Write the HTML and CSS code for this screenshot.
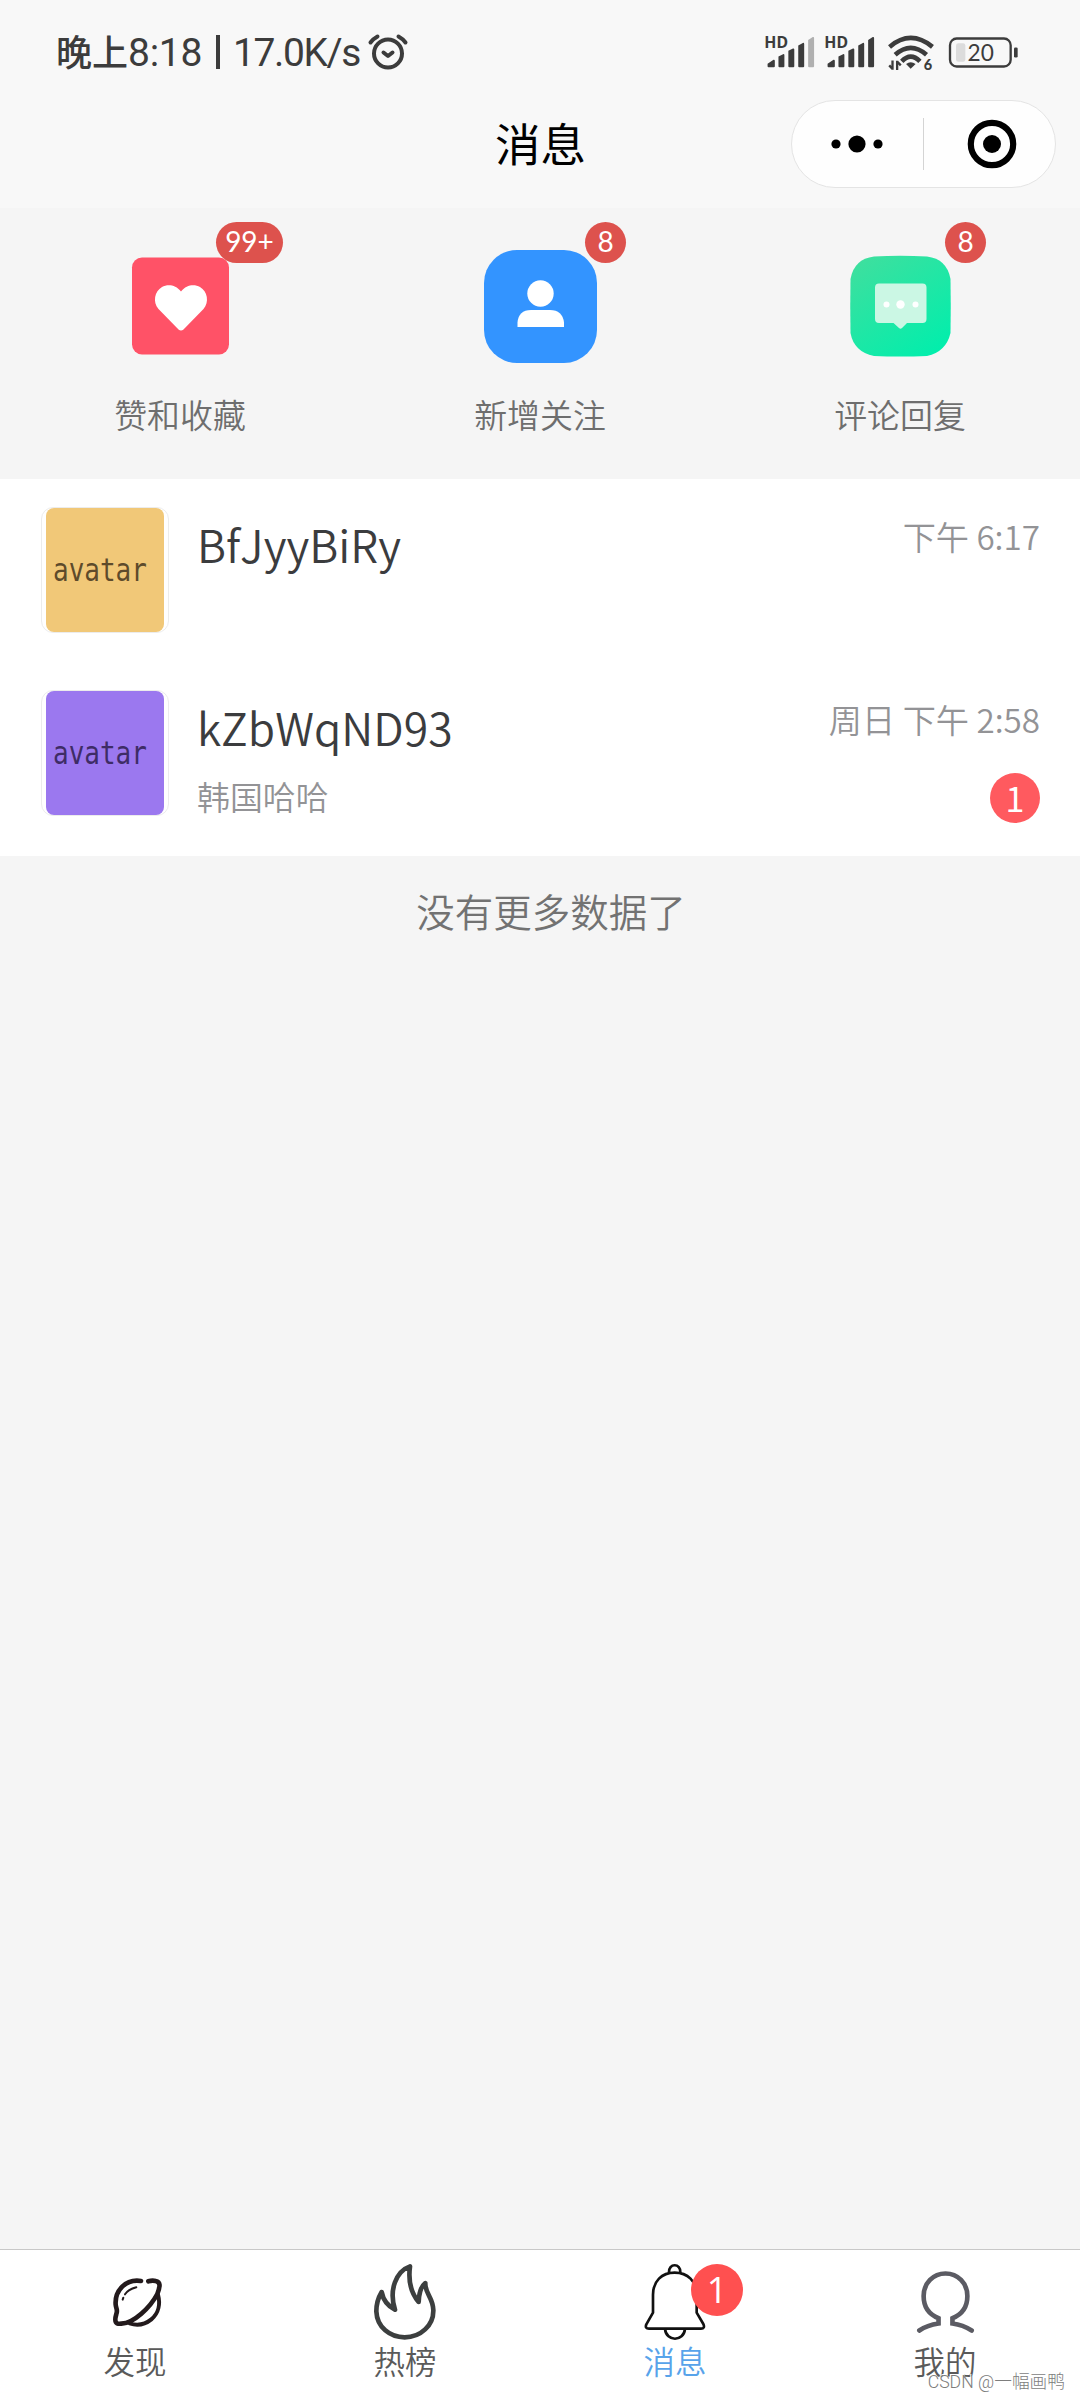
FILE: index.html
```html
<!DOCTYPE html>
<html lang="zh-CN">
<head>
  <meta charset="UTF-8">
  <meta name="viewport" content="width=device-width, initial-scale=1.0">
  <title>消息</title>
  <link rel="stylesheet" href="styles.css">
</head>
<body>
  <!-- Header -->
  <header class="header">
    <div class="status-bar">
      <div class="status-left">
        <span class="status-cn">晚上</span><span class="status-time">8:18</span><span class="status-line"></span><span class="status-speed">17.0K/s</span>
        <svg class="alarm" viewBox="0 0 40 36" fill="none" stroke="#3c3c3c" stroke-width="4" stroke-linecap="round" stroke-linejoin="round">
          <circle cx="20" cy="19.5" r="14"/>
          <path d="M15.5 18.5 L20 22 L24.5 18.5 M2.5 8.5 Q5 5 9.5 2.5 M37.5 8.5 Q35 5 30.5 2.5"/>
        </svg>
      </div>
      <div class="status-right">
        <svg class="signal" viewBox="0 0 150 97" fill="#3c3c3c">
          <text class="hd" x="-3" y="35">HD</text>
          <path d="M7 92 V84 L25 72 Q29 71 29 76 V92 Q29 95 26 95 H10 Q7 95 7 92Z M40 62 L54 55 Q58 54 58 58 V92 Q58 95 55 95 H43 Q40 95 40 92Z M70 45 L84 38 Q88 37 88 41 V92 Q88 95 85 95 H73 Q70 95 70 92Z M100 29 L114 21 Q118 20 118 24 V92 Q118 95 115 95 H103 Q100 95 100 92Z"/>
          <path fill="#b0b0b0" d="M130 12 L144 3 Q148 2 148 6 V92 Q148 95 145 95 H133 Q130 95 130 92Z"/>
        </svg>
        <svg class="signal" viewBox="0 0 150 97" fill="#3c3c3c">
          <text class="hd" x="-3" y="35">HD</text>
          <path d="M7 92 V84 L25 72 Q29 71 29 76 V92 Q29 95 26 95 H10 Q7 95 7 92Z M40 62 L54 55 Q58 54 58 58 V92 Q58 95 55 95 H43 Q40 95 40 92Z M70 45 L84 38 Q88 37 88 41 V92 Q88 95 85 95 H73 Q70 95 70 92Z M100 29 L114 21 Q118 20 118 24 V92 Q118 95 115 95 H103 Q100 95 100 92Z M130 12 L144 3 Q148 2 148 6 V92 Q148 95 145 95 H133 Q130 95 130 92Z"/>
        </svg>
        <svg class="wifi" viewBox="0 0 138 103" fill="none" stroke="#3c3c3c" stroke-width="14">
          <path d="M4 33 Q68 -21 134 33 M21 57 Q68 15 116 57 M41 77 Q68 48 96 77"/>
          <path d="M54 85 Q68 74 83 85 L68 99Z" fill="#3c3c3c" stroke="none"/>
          <path d="M13 74 V102 M13 100 L3 89 M27 103 V75 M27 77 L38 89" stroke-width="7"/>
          <text class="wifi-num" x="108" y="102">6</text>
        </svg>
        <svg class="battery" viewBox="0 0 207 92">
          <rect x="3" y="4" width="182" height="84" rx="20" fill="none" stroke="#3c3c3c" stroke-width="7"/>
          <rect x="21" y="18" width="28" height="56" rx="7" fill="#dcdcdc"/>
          <rect x="195" y="31" width="11" height="30" rx="4" fill="#3c3c3c"/>
          <text class="battery-num" x="95" y="72">20</text>
        </svg>
      </div>
    </div>
    <div class="nav-bar">
      <h1>消息</h1>
      <div class="capsule">
        <svg class="more" viewBox="0 0 52 18">
          <circle cx="5" cy="9" r="4.6"/><circle cx="26" cy="9" r="8.6"/><circle cx="47" cy="9" r="4.6"/>
        </svg>
        <span class="capsule-line"></span>
        <svg class="target" viewBox="0 0 50 50">
          <circle cx="25" cy="25" r="21.2" fill="none" stroke="#000" stroke-width="6.2"/><circle cx="25" cy="25" r="9"/>
        </svg>
      </div>
    </div>
  </header>

  <!-- Notice shortcuts -->
  <section class="notice">
    <div class="notice-item">
      <div class="notice-icon">
        <svg viewBox="0 0 114 114">
          <rect x="9" y="8.5" width="97" height="97" rx="10" fill="#ff5267"/>
          <path fill="#fff" d="M58 42.5 C52.5 35.5 44.500 35 39 38 C31.500 42.500 29.500 53 35.500 60 L55.500 80.500 Q58 82.500 60.500 80.500 L80.500 60 C86.500 53 84.500 42.500 77 38 C71.500 35 63.500 35.500 58 42.500Z"/>
        </svg>
        <span class="notice-badge wide">99+</span>
      </div>
      <span class="notice-label">赞和收藏</span>
    </div>
    <div class="notice-item">
      <div class="notice-icon">
        <svg viewBox="0 0 114 114">
          <rect x="1" y="1" width="113" height="113" rx="33" fill="#3394ff"/>
          <circle cx="57.5" cy="44.5" r="13.2" fill="#fff"/>
          <path fill="#fff" d="M34.5 78 V73.5 Q35.5 61 48 61 H67 Q79.5 61 81 73.5 V78Z"/>
        </svg>
        <span class="notice-badge">8</span>
      </div>
      <span class="notice-label">新增关注</span>
    </div>
    <div class="notice-item">
      <div class="notice-icon">
        <svg viewBox="0 0 114 114">
          <defs>
            <linearGradient id="green" x1="0.1" y1="0" x2="0.8" y2="1">
              <stop offset="0" stop-color="#3fdf9e"/>
              <stop offset="1" stop-color="#02eeac"/>
            </linearGradient>
          </defs>
          <path fill="url(#green)" d="M31 7.5 Q57 6 84 7.5 Q104 10 107.5 30 Q108 57 107.5 84 Q103 103 84 107 Q57 108 31 107 Q11 103 7.5 84 Q7 57 7.5 30 Q11 10 31 7.5Z"/>
          <path fill="#cbf7e4" d="M36 34.5 H79.5 Q83.5 34.5 83.5 38.5 V70 Q83.5 74 79.5 74 H64 L59 79 Q57.5 80.5 56 79 L50.5 74 H36 Q32 74 32 70 V38.5 Q32 34.5 36 34.5Z"/>
          <g fill="#fff"><circle cx="43.5" cy="55.5" r="3"/><circle cx="57.5" cy="55.5" r="4.2"/><circle cx="72.5" cy="55.5" r="3"/></g>
        </svg>
        <span class="notice-badge">8</span>
      </div>
      <span class="notice-label">评论回复</span>
    </div>
  </section>

  <!-- Chat list -->
  <main class="chat-list">
    <div class="chat">
      <div class="avatar"><div class="avatar-img yellow"><span>avatar</span></div></div>
      <div class="chat-body">
        <div class="chat-name">BfJyyBiRy</div>
      </div>
      <div class="chat-side">
        <div class="chat-time">下午 6:17</div>
      </div>
    </div>
    <div class="chat">
      <div class="avatar"><div class="avatar-img purple"><span>avatar</span></div></div>
      <div class="chat-body">
        <div class="chat-name">kZbWqND93</div>
        <div class="chat-text">韩国哈哈</div>
      </div>
      <div class="chat-side">
        <div class="chat-time">周日 下午 2:58</div>
        <div class="unread">1</div>
      </div>
    </div>
  </main>
  <p class="no-more">没有更多数据了</p>

  <!-- Tab bar -->
  <nav class="tab-bar">
    <div class="tab">
      <div class="tab-icon">
        <svg class="discover" viewBox="0 0 147 147" fill="none" stroke="#231a1c" stroke-width="14" stroke-linecap="round" stroke-linejoin="round">
          <path d="M84 9 C38 2 5 38 8 80 C9 92 15 95 10 108 C3 132 8 139 25 137 C62 136 112 88 133 48 C142 24 143 12 128 9 C118 6 112 8 106 10"/>
          <path d="M135 50 C142 76 138 105 115 124 C95 140 70 143 50 136" stroke-width="12"/>
          <path d="M70 28 C52 33 43 38 36 49 M31 59 L29 65" stroke-width="6"/>
        </svg>
      </div>
      <span>发现</span>
    </div>
    <div class="tab">
      <div class="tab-icon">
        <svg class="fire" viewBox="0 0 186 228" fill="none" stroke="#3c3f3f" stroke-width="14" stroke-linejoin="round">
          <path d="M108 7 C66 22 44 78 63 137 C40 125 27 106 23 84 C11 104 7 124 7 142 C9 190 48 220 92 220 C140 220 179 184 178 138 C177 100 152 87 154 57 C140 68 135 86 134 114 C112 88 102 52 108 7Z"/>
        </svg>
      </div>
      <span>热榜</span>
    </div>
    <div class="tab active">
      <div class="tab-icon">
        <svg class="bell" viewBox="0 0 180 228" fill="none" stroke="#111" stroke-width="8" stroke-linejoin="round">
          <path d="M72 27 C70 -4 108 -4 106 27 M24 146 V92 C24 52 50 26 89 26 C128 26 155 52 155 92 V146 L175 180 Q181 194 168 194 H12 Q-1 194 4 181Z M60 195 C64 234 116 234 120 195"/>
        </svg>
        <span class="tab-badge">1</span>
      </div>
      <span>消息</span>
    </div>
    <div class="tab">
      <div class="tab-icon">
        <svg class="mine" viewBox="0 0 172 186" fill="none" stroke="#5b5b63" stroke-width="14" stroke-linecap="round">
          <path d="M7 179 C26 166 43 161 65 158 V142 C35 130 20 105 20 75 C20 36 49 7 86 7 S152 36 152 75 C152 105 137 130 107 142 V158 C129 161 146 167 165 179"/>
        </svg>
      </div>
      <span>我的</span>
    </div>
    <div class="watermark">CSDN @一幅画鸭</div>
  </nav>
</body>
</html>
```
FILE: styles.css
```css
/* General Styling */
body {
  margin: 0;
  width: 1080px;
  height: 2400px;
  display: flex;
  flex-direction: column;
  overflow: hidden;
  background-color: #f5f5f5;
  font-family: "Noto Sans CJK SC", sans-serif;
}

svg {
  display: block;
  overflow: visible;
}

/* Header */
.header {
  height: 208px;
  background-color: #f8f8f8;
}

.status-bar {
  height: 100px;
  box-sizing: border-box;
  padding: 0 62px 0 56px;
  display: flex;
  justify-content: space-between;
  color: #3c3c3c;
}

.status-left {
  display: flex;
  align-items: center;
  height: 104px;
  font-family: Roboto, sans-serif;
  font-size: 39px;
  font-weight: 450;
}

.status-cn {
  margin-bottom: 4px;
  font-family: "Noto Sans CJK SC", sans-serif;
  font-size: 36px;
  font-weight: 500;
}

.status-time {
  margin-top: 1px;
  letter-spacing: -0.3px;
}

.status-line {
  width: 4px;
  height: 34px;
  margin: 0 13px 0 14px;
  background-color: #3c3c3c;
}

.status-speed {
  margin-top: 1px;
  letter-spacing: -1.4px;
}

.alarm {
  width: 40px;
  height: 36px;
  margin-left: 8px;
}

.status-right {
  display: flex;
  align-items: center;
  height: 104px;
}

.signal {
  width: 50px;
  height: 32px;
  margin-right: 10px;
}

.hd {
  font-family: "Noto Sans", sans-serif;
  font-size: 48px;
  font-weight: 700;
}

.wifi {
  width: 46px;
  height: 34px;
  margin: 1px 15px 0 3px;
}

.wifi-num {
  font-family: Lato, sans-serif;
  font-size: 44px;
  font-weight: 900;
  fill: #3c3c3c;
  stroke: none;
}

.battery {
  width: 69px;
  height: 31px;
}

.battery-num {
  font-family: Lato, sans-serif;
  font-size: 68px;
  fill: #3c3c3c;
  text-anchor: middle;
}

.nav-bar {
  height: 88px;
  padding: 0 24px 0 291px;
  display: flex;
  align-items: center;
}

.nav-bar h1 {
  flex: 1;
  margin: 0 1px 4px 0;
  text-align: center;
  font-size: 45.5px;
  font-weight: 400;
  line-height: 84px;
  color: #000;
}

.capsule {
  width: 265px;
  height: 88px;
  box-sizing: border-box;
  border: 1px solid #e4e4e4;
  border-radius: 44px;
  background-color: #fefefe;
  display: flex;
  align-items: center;
}

.more {
  width: 52px;
  height: 18px;
  margin: 0 40px 0 39px;
}

.capsule-line {
  width: 1px;
  height: 52px;
  background-color: #d4d4d4;
}

.target {
  width: 50px;
  height: 50px;
  margin-left: 43px;
}

/* Notice shortcuts */
.notice {
  height: 271px;
  box-sizing: border-box;
  padding-top: 41px;
  display: flex;
}

.notice-item {
  width: 360px;
  display: flex;
  flex-direction: column;
  align-items: center;
}

.notice-icon {
  position: relative;
  width: 114px;
  height: 114px;
}

.notice-badge {
  position: absolute;
  left: 102px;
  top: -27px;
  width: 41px;
  height: 41px;
  border-radius: 21px;
  background-color: #dd524d;
  color: #fff;
  font-family: Lato, sans-serif;
  font-size: 28px;
  line-height: 38px;
  text-align: center;
}

.notice-badge.wide {
  left: 93px;
  width: 67px;
}

.notice-label {
  margin-top: 31px;
  font-size: 32.9px;
  font-weight: 350;
  line-height: 40px;
  color: #6e6e6e;
}

/* Chat list */
.chat-list {
  height: 377px;
  background-color: #fff;
}

.chat {
  height: 182.5px;
  box-sizing: border-box;
  padding: 28px 40px 0 41px;
  display: flex;
}

.avatar {
  width: 128px;
  height: 126px;
  box-sizing: border-box;
  border: 1px solid #ececec;
  border-radius: 12px;
  display: flex;
  justify-content: center;
}

.avatar-img {
  width: 118px;
  height: 124px;
  border-radius: 8px;
}

.avatar-img span {
  display: block;
  margin-left: 7px;
  font-family: "DejaVu Sans Mono", monospace;
  font-size: 26px;
  line-height: 124px;
  transform: scaleY(1.22);
}

.yellow {
  background-color: #f1c878;
  color: #5e4b2b;
}

.purple {
  background-color: #9b78ef;
  color: #3e2c66;
}

.chat-body {
  flex: 1;
  padding: 5px 0 0 28px;
}

.chat-name {
  font-size: 44.5px;
  font-weight: 350;
  line-height: 64px;
  color: #3b3c3e;
}

.chat-text {
  margin-top: 17px;
  font-size: 32.9px;
  font-weight: 350;
  line-height: 40px;
  color: #939396;
}

.chat-side {
  display: flex;
  flex-direction: column;
  align-items: flex-end;
}

.chat-time {
  margin-top: 6px;
  font-size: 33.2px;
  font-weight: 350;
  line-height: 46px;
  color: #939396;
}

.unread {
  width: 50px;
  height: 50px;
  margin-top: 31px;
  border-radius: 50%;
  background-color: #ff5a5f;
  color: #fff;
  font-size: 34px;
  line-height: 50px;
  text-align: center;
}

.no-more {
  margin: 29px 0 0 22px;
  text-align: center;
  font-size: 38.5px;
  font-weight: 350;
  line-height: 50px;
  color: #727272;
}

/* Tab bar */
.tab-bar {
  position: relative;
  height: 151px;
  box-sizing: border-box;
  margin-top: auto;
  border-top: 1px solid #c8c8c8;
  background-color: #fff;
  display: flex;
}

.tab {
  width: 270px;
  padding-top: 14px;
  display: flex;
  flex-direction: column;
  align-items: center;
  font-size: 31.5px;
  font-weight: 350;
  line-height: 40px;
  color: #5a5a5a;
}

.tab.active {
  color: #58a3ea;
}

.tab-icon {
  position: relative;
  height: 76px;
  display: flex;
  align-items: center;
}

.discover {
  width: 49px;
  height: 49px;
  margin-left: 4px;
}

.fire {
  width: 62px;
  height: 76px;
}

.bell {
  width: 60px;
  height: 76px;
}

.mine {
  width: 57px;
  height: 62px;
}

.tab-badge {
  position: absolute;
  left: 46px;
  top: 0;
  width: 52px;
  height: 52px;
  border-radius: 50%;
  background-color: #ff5050;
  color: #fff;
  font-family: "Open Sans", sans-serif;
  font-size: 36px;
  font-weight: 400;
  line-height: 52px;
  text-align: center;
}

.watermark {
  position: absolute;
  right: 15px;
  bottom: 5px;
  font-family: Roboto, "Noto Sans CJK SC", sans-serif;
  font-size: 17.7px;
  font-weight: 300;
  line-height: 26px;
  color: #7d7d7d;
  text-shadow: -1px -1px 0 #fff;
}
```
